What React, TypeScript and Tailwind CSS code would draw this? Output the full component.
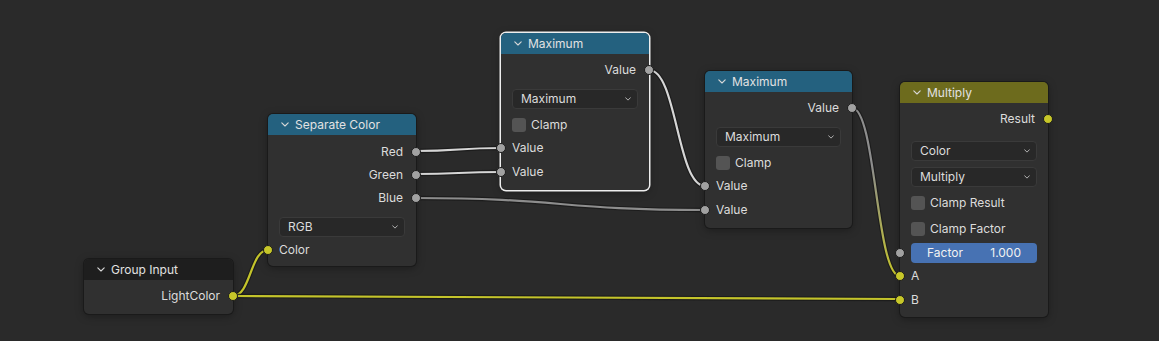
import type { ReactNode } from 'react';

const GRAY = '#a1a1a1';
const YELLOW = '#c7c729';

// bezier like blender's noodle: horizontal handles, half the x distance
const noodle = (x1: number, y1: number, x2: number, y2: number) => {
  const h = Math.abs(x2 - x1) * 0.5;
  return `M${x1} ${y1} C${x1 + h} ${y1} ${x2 - h} ${y2} ${x2} ${y2}`;
};

const links = [
  { d: noodle(233, 296, 268, 250), color: '#c4c42b' },
  { d: noodle(233, 296, 900, 299), color: '#c4c42b' },
  { d: noodle(416, 151, 501, 148), color: '#d6d6d6' },
  { d: noodle(416, 174, 501, 172), color: '#d6d6d6' },
  { d: noodle(416, 198, 705, 210), color: '#8d8d8d' },
  { d: noodle(649, 70, 705, 186), color: '#d6d6d6' },
  { d: noodle(852, 108, 900, 276), color: 'url(#grayToYellow)' },
];

function Socket({ color, side }: { color: string; side: 'left' | 'right' }) {
  return (
    <span
      className={`absolute top-1/2 -translate-y-1/2 w-[10px] h-[10px] rounded-full border border-[#1c1c1c] ${
        side === 'left' ? 'left-[-5px]' : 'right-[-5px]'
      }`}
      style={{ backgroundColor: color }}
    />
  );
}

function Chevron({ className }: { className?: string }) {
  return (
    <svg viewBox="0 0 8 5" className={className} fill="none">
      <path d="M0.8 0.8 L4 4 L7.2 0.8" stroke="currentColor" strokeWidth="1.1" strokeLinecap="round" strokeLinejoin="round" />
    </svg>
  );
}

function Node({
  title,
  header,
  left,
  top,
  width,
  selected,
  children,
}: {
  title: string;
  header: string;
  left: number;
  top: number;
  width: number;
  selected?: boolean;
  children: ReactNode;
}) {
  return (
    <div
      className={`absolute rounded-[5px] bg-[#303030] ${
        selected
          ? 'shadow-[0_0_0_1.5px_#eeeeee,0_2px_8px_rgba(0,0,0,0.35)]'
          : 'shadow-[0_0_0_1px_#1a1a1a,0_2px_8px_rgba(0,0,0,0.35)]'
      }`}
      style={{ left, top, width }}
    >
      <div className="h-[21px] flex items-center rounded-t-[5px] pl-[13px] gap-[6px] text-[#e2e2e2]" style={{ backgroundColor: header }}>
        <Chevron className="w-[8px] h-[5px] text-[#d8d8d8]" />
        <span className="text-[12px] leading-none">{title}</span>
      </div>
      {children}
    </div>
  );
}

function OutputRow({ label, color = GRAY, h = 'h-6' }: { label: string; color?: string; h?: string }) {
  return (
    <div className={`relative ${h} flex items-center justify-end pr-[13px] text-[12px] text-[#dcdcdc]`}>
      {label}
      <Socket color={color} side="right" />
    </div>
  );
}

function InputRow({ label, color = GRAY, className = '' }: { label: string; color?: string; className?: string }) {
  return (
    <div className={`relative h-6 flex items-center pl-[11px] text-[12px] text-[#dcdcdc] ${className}`}>
      {label}
      <Socket color={color} side="left" />
    </div>
  );
}

function Dropdown({ label, className = '' }: { label: string; className?: string }) {
  return (
    <div className={`mx-[11px] h-5 flex items-center justify-between pl-[8px] pr-[6px] rounded-[4px] bg-[#282828] border border-[#3a3a3a] text-[12px] text-[#dcdcdc] ${className}`}>
      <span>{label}</span>
      <Chevron className="w-[6px] h-[4px] text-[#cfcfcf]" />
    </div>
  );
}

function CheckRow({ label, className = '' }: { label: string; className?: string }) {
  return (
    <div className={`h-5 flex items-center gap-[5px] pl-[11px] text-[12px] text-[#dcdcdc] ${className}`}>
      <span className="w-[14px] h-[14px] rounded-[3px] bg-[#545454]" />
      {label}
    </div>
  );
}

export default function App() {
  return (
    <div className="relative w-[1159px] h-[341px] overflow-hidden bg-[#2a2a2a] font-[Inter,sans-serif]">
      {/* Links */}
      <svg className="absolute inset-0" width={1159} height={341}>
        <defs>
          <linearGradient id="grayToYellow" gradientUnits="userSpaceOnUse" x1="852" y1="108" x2="900" y2="276">
            <stop offset="0" stopColor="#8d8d8d" />
            <stop offset="0.35" stopColor="#8d8d8d" />
            <stop offset="1" stopColor="#c4c42b" />
          </linearGradient>
        </defs>
        {links.map((l, i) => (
          <g key={i} fill="none">
            <path d={l.d} stroke="#1a1a1a" strokeOpacity="0.85" strokeWidth="4.5" />
            <path d={l.d} stroke={l.color} strokeWidth="2.2" />
          </g>
        ))}
      </svg>

      {/* Group Input */}
      <Node title="Group Input" header="#1e1e1e" left={84} top={259} width={149}>
        <div className="pt-1 pb-[6px]">
          <OutputRow label="LightColor" color={YELLOW} />
        </div>
      </Node>

      {/* Separate Color */}
      <Node title="Separate Color" header="#24617f" left={268} top={114} width={148}>
        <div className="pt-[5px] pb-1">
          <OutputRow label="Red" h="h-[23px]" />
          <OutputRow label="Green" h="h-[23px]" />
          <OutputRow label="Blue" h="h-[23px]" />
          <Dropdown label="RGB" className="mt-2" />
          <InputRow label="Color" color={YELLOW} className="mt-[1px]" />
        </div>
      </Node>

      {/* Maximum (selected) */}
      <Node title="Maximum" header="#24617f" left={501} top={33} width={148} selected>
        <div className="pt-1 pb-[6px]">
          <OutputRow label="Value" />
          <Dropdown label="Maximum" className="mt-[7px]" />
          <CheckRow label="Clamp" className="mt-[6px]" />
          <InputRow label="Value" className="mt-[1px]" />
          <InputRow label="Value" />
        </div>
      </Node>

      {/* Maximum */}
      <Node title="Maximum" header="#24617f" left={705} top={71} width={147}>
        <div className="pt-1 pb-[6px]">
          <OutputRow label="Value" />
          <Dropdown label="Maximum" className="mt-[7px]" />
          <CheckRow label="Clamp" className="mt-[6px]" />
          <InputRow label="Value" className="mt-[1px]" />
          <InputRow label="Value" />
        </div>
      </Node>

      {/* Multiply */}
      <Node title="Multiply" header="#6d6b1d" left={900} top={82} width={148}>
        <div className="pt-1 pb-[5px]">
          <OutputRow label="Result" color={YELLOW} />
          <Dropdown label="Color" className="mt-[10px]" />
          <Dropdown label="Multiply" className="mt-[6px]" />
          <CheckRow label="Clamp Result" className="mt-[6px]" />
          <CheckRow label="Clamp Factor" className="mt-[6px]" />
          <div className="relative mt-1 h-5 px-[11px]">
            <div className="h-5 flex items-center justify-between pl-[16px] pr-[16px] rounded-[4px] bg-[#4772b3] text-[12px] text-[#f2f2f2]">
              <span>Factor</span>
              <span>1.000</span>
            </div>
            <Socket color={GRAY} side="left" />
          </div>
          <InputRow label="A" color={YELLOW} className="mt-[1px]" />
          <InputRow label="B" color={YELLOW} />
        </div>
      </Node>
    </div>
  );
}
